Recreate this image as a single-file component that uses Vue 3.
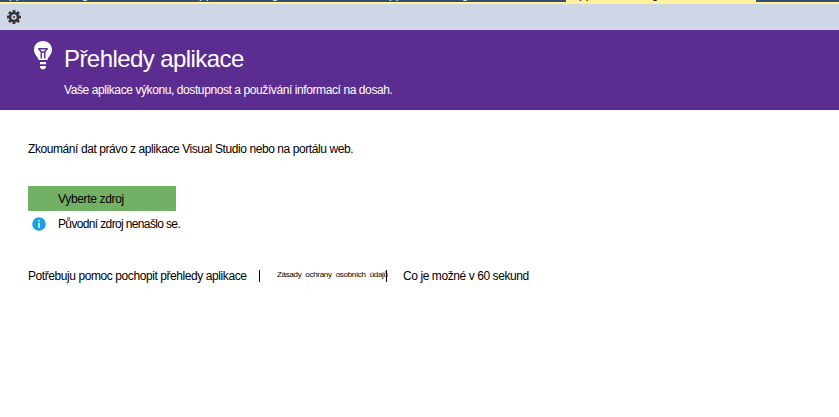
<script setup>
const tabs = [
  { label: 'Application Insights', active: false },
  { label: 'Application Insights', active: false },
  { label: 'Application Insights', active: false },
  { label: 'Application Insights', active: true },
]
</script>

<template>
  <main class="window">
    <nav class="tabs">
      <div v-for="(tab, i) in tabs" :key="i" class="tab" :class="{ active: tab.active }">
        <span>{{ tab.label }}</span>
      </div>
    </nav>
    <div class="toolbar">
      <svg class="gear" viewBox="0 0 14 14">
        <g fill="#343438">
          <rect v-for="a in [0, 45, 90, 135]" :key="a" x="5.6" y="0" width="2.8" height="14" :transform="`rotate(${a} 7 7)`" />
          <circle cx="7" cy="7" r="5.2" />
        </g>
        <circle cx="7" cy="7" r="2.7" fill="#cfd6e5" />
        <circle cx="7" cy="7" r="1.1" fill="#343438" />
      </svg>
    </div>
    <header class="banner">
      <svg class="bulb" viewBox="0 0 20 30">
        <path fill="#fff" d="M10 0C4.700 0 1 3.800 1 8.700c0 3.400 1.700 5.200 3.200 7.200.8 1.100 1.200 2.100 1.400 3.100h8.800c.2-1 .6-2 1.400-3.100C17.300 13.900 19 12.100 19 8.700 19 3.800 15.300 0 10 0z" />
        <path fill="none" stroke="#5c2d91" stroke-width="1.500" d="M5.200 7.700h9.600M6 8l2.300 3v6.500M14 8l-2.300 3v6.500M8 11h4" />
        <path fill="#fff" d="M7 21h6v2.200H7zM7 25h6v1.500l-1.500 1.700h-3L7 26.500z" />
      </svg>
      <div class="heading">
        <h1>Přehledy aplikace</h1>
        <p>Vaše aplikace výkonu, dostupnost a používání informací na dosah.</p>
      </div>
    </header>
    <section class="content">
      <p class="intro">Zkoumání dat právo z aplikace Visual Studio nebo na portálu web.</p>
      <button class="select">Vyberte zdroj</button>
      <div class="status">
        <svg viewBox="0 0 14 14">
          <circle cx="7" cy="7" r="6.800" fill="#1ba1e2" />
          <path fill="#fff" d="M6.300 3h1.400v1.500H6.300zM6.300 5.700h1.400V11H6.300z" />
        </svg>
        <span>Původní zdroj nenašlo se.</span>
      </div>
      <footer class="links">
        <a class="help">Potřebuju pomoc pochopit přehledy aplikace</a>
        <i class="bar"></i>
        <a class="privacy">Zásady ochrany osobních údajů</a>
        <i class="bar"></i>
        <a class="video">Co je možné v 60 sekund</a>
      </footer>
    </section>
  </main>
</template>

<style>
body { margin: 0; background: #fff; }
</style>

<style scoped>
.window { width: 839px; height: 417px; overflow: hidden; background: #fff; color: #000; font: 12px/16px "Liberation Sans", Arial, sans-serif; letter-spacing: -0.42px; }
.tabs { display: flex; height: 2px; overflow: hidden; background: #364e6f; border-bottom: 2px solid #fff29d; }
.tab { width: 190px; height: 2px; flex: none; display: flex; align-items: flex-end; color: #fff; white-space: nowrap; letter-spacing: 0; }
.tab:nth-child(3) { width: 186px; }
.tab span { margin-left: 1px; line-height: 14px; margin-bottom: 1px; }
.tab.active { background: #fff29d; color: #000; }
.tab.active span { margin-left: 5px; }
.toolbar { height: 26px; display: flex; align-items: center; padding-left: 7px; background: #cfd6e5; }
.gear { width: 14px; height: 14px; }
.banner { height: 80px; display: flex; background: #5c2d91; color: #fff; }
.bulb { width: 20px; height: 30px; margin: 11px 0 0 33px; }
.heading { padding: 14px 0 0 11px; }
h1 { margin: 0; font-size: 24px; line-height: 30px; font-weight: 400; letter-spacing: -0.57px; }
p { margin: 0; white-space: nowrap; }
.heading p { margin-top: 8px; letter-spacing: -0.41px; }
.content { padding: 31px 28px 0; }
.select { display: block; width: 148px; height: 25px; margin-top: 29px; padding: 0 0 0 30px; border: 0; background: #71b065; color: #000; text-align: left; font: inherit; letter-spacing: -0.34px; }
.status { display: flex; align-items: center; height: 16px; margin-top: 5px; padding-left: 4px; letter-spacing: -0.64px; }
.status svg { width: 14px; height: 14px; margin-right: 12px; }
.links { display: flex; align-items: center; height: 16px; margin-top: 36px; white-space: nowrap; }
.help { width: 231px; }
.bar { width: 1px; height: 12px; background: #000; }
.privacy { width: 109px; margin-left: 17px; font-size: 8px; line-height: 10px; margin-top: -3px; letter-spacing: -0.3px; word-spacing: 2px; }
.video { margin-left: 16px; }
</style>
